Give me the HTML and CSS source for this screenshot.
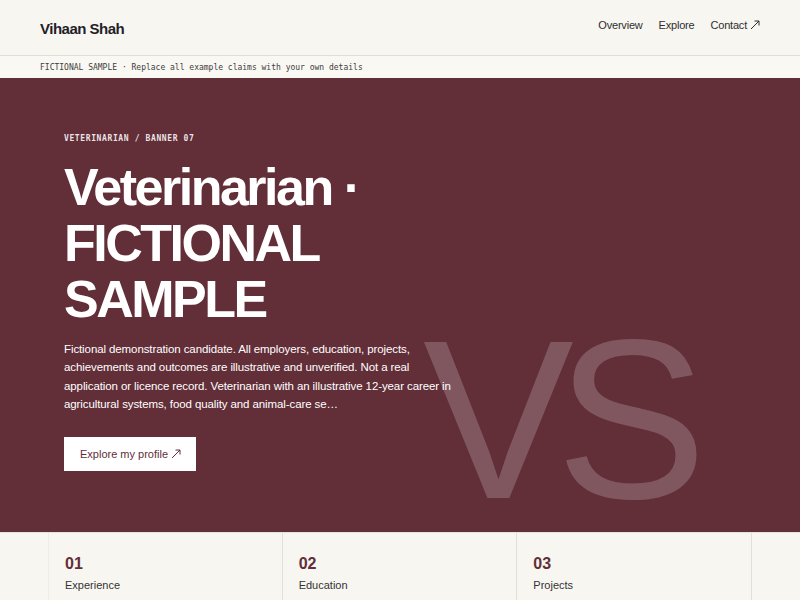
FILE: index.html
```html
<!DOCTYPE html>
<html lang="en">
<head>
<meta charset="utf-8">
<title>Vihaan Shah — Veterinarian</title>
<link rel="stylesheet" href="styles.css">
</head>
<body>
<header class="site-header">
  <div class="brand">Vihaan Shah</div>
  <nav class="nav">
    <a href="#" class="nav-link">Overview</a>
    <a href="#" class="nav-link">Explore</a>
    <a href="#" class="nav-link">Contact <svg class="arrow" viewBox="0 0 10 10" width="10" height="10"><path d="M1 9 L9 1 M4.5 1 H9 V5.5" fill="none" stroke="currentColor" stroke-width="1"/></svg></a>
  </nav>
</header>
<div class="notice">FICTIONAL SAMPLE · Replace all example claims with your own details</div>
<section class="hero">
  <div class="hero-mark" aria-hidden="true">VS</div>
  <div class="hero-content">
    <div class="eyebrow">VETERINARIAN / BANNER 07</div>
    <h1 class="hero-title">Veterinarian · FICTIONAL SAMPLE</h1>
    <p class="hero-text">Fictional demonstration candidate. All employers, education, projects, achievements and outcomes are illustrative and unverified. Not a real application or licence record. Veterinarian with an illustrative 12-year career in agricultural systems, food quality and animal-care se…</p>
    <a href="#" class="btn">Explore my profile <svg class="arrow" viewBox="0 0 10 10" width="10" height="10"><path d="M1 9 L9 1 M4.5 1 H9 V5.5" fill="none" stroke="currentColor" stroke-width="1"/></svg></a>
  </div>
</section>
<section class="cards-wrap">
  <div class="cards">
    <div class="card"><div class="card-num">01</div><div class="card-label">Experience</div></div>
    <div class="card"><div class="card-num">02</div><div class="card-label">Education</div></div>
    <div class="card"><div class="card-num">03</div><div class="card-label">Projects</div></div>
  </div>
</section>
</body>
</html>
```
FILE: styles.css
```css
html, body {
  margin: 0;
  padding: 0;
}
body {
  background: #f8f6f1;
  font-family: "Liberation Sans", Arial, sans-serif;
  color: #2a2a2a;
}
a,
a:link,
a:visited {
  text-decoration: none;
  color: inherit;
}
.site-header {
  height: 55px;
  padding: 0 40px;
  display: flex;
  align-items: center;
  justify-content: space-between;
  border-bottom: 1px solid #e2dfd9;
}
.brand {
  font-size: 15px;
  font-weight: 700;
  letter-spacing: -0.5px;
  color: #1f2228;
  padding-top: 1px;
}
.nav {
  display: flex;
  gap: 16px;
  padding-bottom: 5px;
  color: #2e2e2e;
}
.nav-link {
  font-size: 11px;
  letter-spacing: -0.2px;
  display: inline-flex;
  align-items: center;
  gap: 3px;
}
.arrow {
  display: block;
}
.notice {
  height: 22px;
  padding: 0 40px;
  display: flex;
  align-items: center;
  background: #faf8f3;
  font-family: "DejaVu Sans Mono", "Liberation Mono", monospace;
  font-size: 8px;
  color: #3d3d3d;
}
.hero {
  position: relative;
  height: 454px;
  box-sizing: border-box;
  padding: 54px 64px 0;
  background: #622e38;
  overflow: hidden;
  color: #fff;
}
.hero-mark {
  position: absolute;
  left: 423px;
  top: 240px;
  font-size: 226px;
  line-height: 0.9;
  letter-spacing: -0.078em;
  color: rgba(255, 255, 255, 0.2);
  white-space: nowrap;
}
.hero-content {
  position: relative;
  max-width: 400px;
}
.eyebrow {
  font-family: "DejaVu Sans Mono", "Liberation Mono", monospace;
  font-weight: 700;
  font-size: 8px;
  line-height: 13px;
  letter-spacing: 0.62px;
  color: rgba(255, 255, 255, 0.88);
  margin: 0 0 14px;
}
.hero-title {
  font-size: 52px;
  line-height: 56px;
  font-weight: 700;
  letter-spacing: -2.5px;
  margin: 0 0 13px;
}
.hero-text {
  font-size: 11.5px;
  line-height: 18.4px;
  letter-spacing: -0.1px;
  margin: 0 0 23px;
  color: #fff;
}
.btn {
  display: inline-flex;
  align-items: center;
  gap: 3px;
  height: 34px;
  padding: 0 15px 0 16px;
  background: #fff;
  color: #622e38;
  font-size: 11px;
}
.hero .btn {
  color: #622e38;
}
.cards-wrap {
  border-top: 1px solid #e6e2dc;
}
.cards {
  display: grid;
  grid-template-columns: repeat(3, 1fr);
  margin: 0 48px;
}
.card {
  padding: 21px 16px;
  border-right: 1px solid #e2ded8;
}
.card:first-child {
  border-left: 1px solid #efebe5;
}
.card-num {
  font-size: 16px;
  line-height: 19px;
  font-weight: 700;
  color: #622e38;
}
.card-label {
  font-size: 11px;
  line-height: 15px;
  margin-top: 5px;
  color: #333;
}
```
